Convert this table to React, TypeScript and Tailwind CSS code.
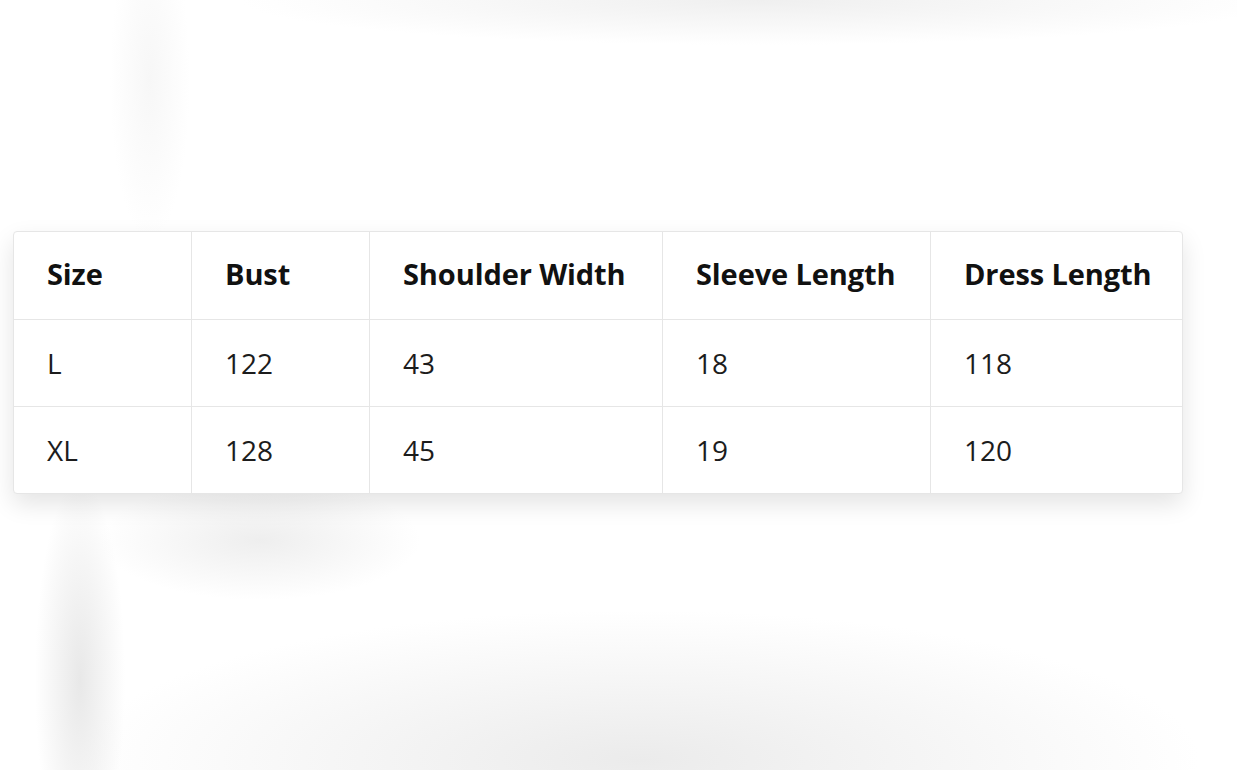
const headers = ["Size", "Bust", "Shoulder Width", "Sleeve Length", "Dress Length"];

const rows = [
  ["L", "122", "43", "18", "118"],
  ["XL", "128", "45", "19", "120"],
];

const App = () => {
  return (
    <div
      className="w-[1237px] h-[770px] overflow-hidden pt-[231px] pl-[13px] bg-white bg-[radial-gradient(ellipse_45px_200px_at_80px_680px,#e8e8e8,transparent),radial-gradient(ellipse_560px_150px_at_640px_760px,#ebebeb,transparent),radial-gradient(ellipse_160px_60px_at_260px_540px,#eeeeee,transparent),radial-gradient(ellipse_520px_45px_at_760px_0px,#efefef,transparent),radial-gradient(ellipse_40px_160px_at_150px_80px,#f7f7f7,transparent)]"
      style={{ fontFamily: '"Open Sans", "Noto Sans", sans-serif' }}
    >
      <div className="w-[1170px] rounded-[4px] bg-white shadow-[0_10px_24px_rgba(0,0,0,0.11)] border border-[#e6e6e6] overflow-hidden">
        <div className="grid grid-cols-[177px_178px_293px_268px_252px] h-[87px] text-[29px] font-bold text-[#111]">
          {headers.map((h, i) => (
            <div
              key={h}
              className={`flex items-center pl-[33px] pb-[3px] tracking-[-0.1px] ${i > 0 ? "border-l border-[#e6e6e6]" : ""}`}
            >
              {h}
            </div>
          ))}
        </div>
        {rows.map((r) => (
          <div
            key={r[0]}
            className="grid grid-cols-[177px_178px_293px_268px_252px] h-[87px] border-t border-[#e6e6e6] text-[28px] text-[#1c1c1c]"
          >
            {r.map((c, i) => (
              <div
                key={i}
                className={`flex items-center pl-[33px] pb-[1px] ${i > 0 ? "border-l border-[#e6e6e6]" : ""}`}
              >
                {c}
              </div>
            ))}
          </div>
        ))}
      </div>
    </div>
  );
};

export default App;
